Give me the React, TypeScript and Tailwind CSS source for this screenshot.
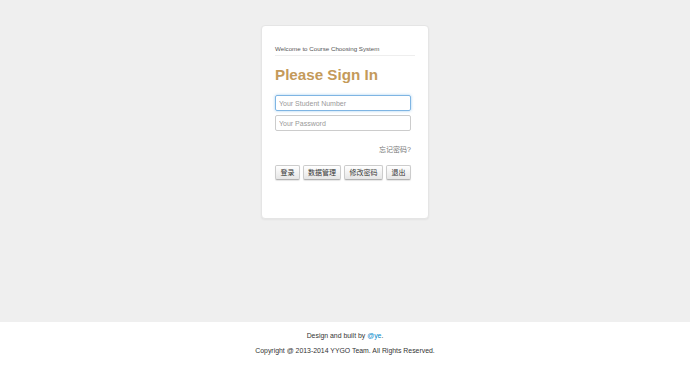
import React from 'react'

const font = { fontFamily: '"Liberation Sans", Arial, "Noto Sans CJK SC", sans-serif' }

const buttons = [
  { label: '登录', w: 'w-[25px]' },
  { label: '数据管理', w: 'w-[38px]' },
  { label: '修改密码', w: 'w-[39px]' },
  { label: '退出', w: 'w-[25px]' },
]

export default function App() {
  return (
    <div className="w-[690px] h-[370px] flex flex-col bg-[#efefef]" style={font}>
      <main className="h-[322px] flex justify-center pt-[25px]">
        <div className="w-[168px] h-[194px] bg-white rounded-[4px] border border-[#e5e5e5] px-[13px] pt-[18px] shadow-[0_1px_2px_rgba(0,0,0,0.05)]">
          <div className="text-[6.2px] leading-[9px] text-[#555] pb-[2px] border-b border-[#eee]">
            Welcome to Course Choosing System
          </div>
          <h2 className="mt-[10px] text-[15.2px] leading-[18px] font-bold text-[#c49a5a]">
            Please Sign In
          </h2>
          <div className="mt-[11px] flex flex-col gap-[4px]">
            <input
              className="w-[136px] h-[16px] px-[3px] text-[7px] border border-[#7fb5e3] rounded-[2px] outline-none shadow-[0_0_3px_rgba(102,175,233,0.6)] placeholder:text-[#999]"
              placeholder="Your Student Number"
            />
            <input
              className="w-[136px] h-[16px] px-[3px] text-[7px] border border-[#ccc] rounded-[2px] outline-none placeholder:text-[#999]"
              placeholder="Your Password"
              type="password"
            />
          </div>
          <div className="mt-[14px] w-[136px] text-right text-[7px] leading-[10px] text-[#777]">
            忘记密码?
          </div>
          <div className="mt-[10px] w-[136px] flex justify-between">
            {buttons.map(b => (
              <button
                key={b.label}
                className={`${b.w} h-[15px] text-[7px] leading-[13px] text-[#333] border border-[#ccc] border-b-[#b3b3b3] rounded-[2px] bg-gradient-to-b from-white to-[#e6e6e6] shadow-[0_1px_1px_rgba(0,0,0,0.1)]`}
              >
                {b.label}
              </button>
            ))}
          </div>
        </div>
      </main>
      <footer className="flex-1 bg-white flex flex-col items-center pt-[9px] text-[6.9px] text-[#333]">
        <div className="leading-[10px]">
          Design and built by <span className="text-[#08c]">@ye</span>.
        </div>
        <div className="mt-[5px] leading-[10px]">Copyright @ 2013-2014 YYGO Team. All Rights Reserved.</div>
      </footer>
    </div>
  )
}
